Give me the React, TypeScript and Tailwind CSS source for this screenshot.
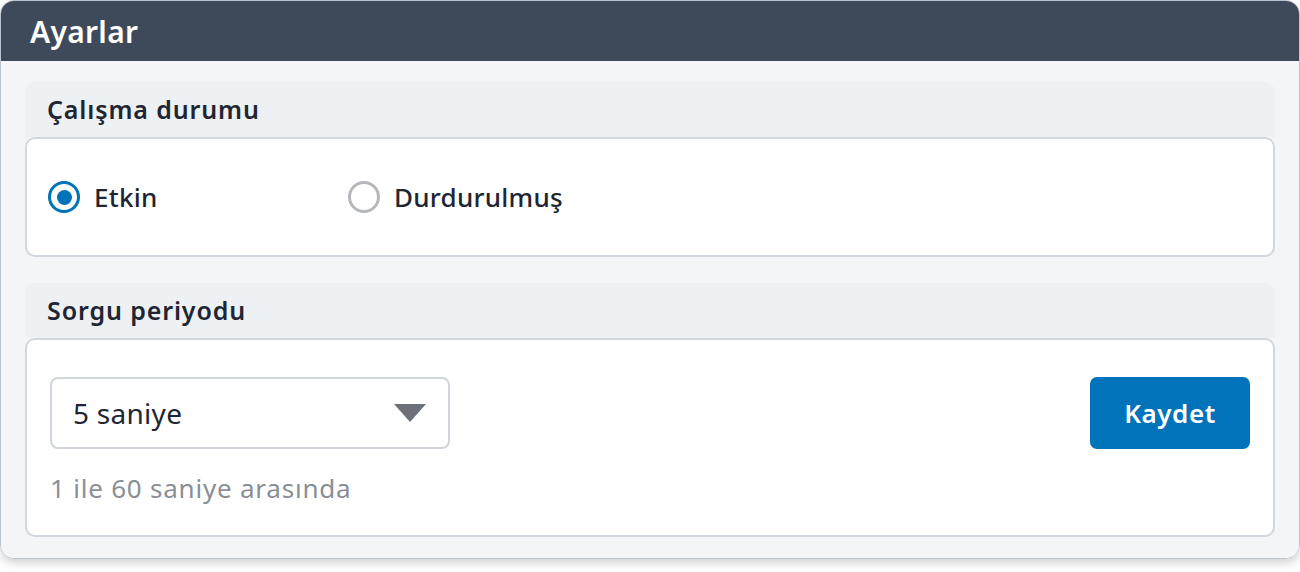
import { useState } from "react";

const FONT = { fontFamily: '"Noto Sans", "Open Sans", sans-serif' };

function SectionTitle({ children }: { children: React.ReactNode }) {
  return (
    <div className="h-[55px] rounded-t-[10px] bg-[#edf1f4] px-[22px] flex items-center text-[25px] tracking-[0.035em] font-semibold text-[#1f2633]">
      {children}
    </div>
  );
}

function Radio({
  checked,
  label,
  onSelect
}: {
  checked: boolean;
  label: string;
  onSelect: () => void;
}) {
  return (
    <button onClick={onSelect} className="flex items-center gap-[14px] cursor-pointer">
      <span
        className={
          checked
            ? "w-[32px] h-[32px] rounded-full border-[3px] border-[#0073bb] flex items-center justify-center"
            : "w-[32px] h-[32px] rounded-full border-[3px] border-[#b4b8bd] flex items-center justify-center"
        }
      >
        {checked && <span className="w-[15px] h-[15px] rounded-full bg-[#0073bb]" />}
      </span>
      <span className="text-[26px] tracking-[0.01em] font-medium text-[#1f2633]">{label}</span>
    </button>
  );
}

export default function App() {
  const [status, setStatus] = useState<"active" | "paused">("active");

  return (
    <div className="w-[1300px] h-[572px] bg-white" style={FONT}>
      <div className="h-[559px] border border-[#b9c3cd] rounded-[14px] overflow-hidden shadow-[0_4px_10px_rgba(0,0,0,0.18)] flex flex-col">
        <div className="h-[60px] shrink-0 bg-[#3e4a59] px-[29px] flex items-center text-[30px] tracking-[0.01em] font-semibold text-white">
          Ayarlar
        </div>

        <div className="flex-1 bg-[#f3f5f7] px-[24px] pt-[21px] flex flex-col gap-[26px]">
          <div>
            <SectionTitle>Çalışma durumu</SectionTitle>
            <div className="h-[120px] bg-white border-2 border-[#d0d7de] rounded-[10px] px-[21px] flex items-center">
              <div className="w-[300px]">
                <Radio
                  checked={status === "active"}
                  label="Etkin"
                  onSelect={() => setStatus("active")}
                />
              </div>
              <Radio
                checked={status === "paused"}
                label="Durdurulmuş"
                onSelect={() => setStatus("paused")}
              />
            </div>
          </div>

          <div>
            <SectionTitle>Sorgu periyodu</SectionTitle>
            <div className="h-[199px] bg-white border-2 border-[#d0d7de] rounded-[10px] pl-[23px] pr-[23px] pt-[37px]">
              <div className="flex items-start justify-between">
                <div className="w-[400px] h-[72px] border-2 border-[#d0d6dc] rounded-[8px] pl-[21px] pr-[22px] flex items-center justify-between">
                  <span className="text-[28px] tracking-[0.01em] text-[#1f2633]">5 saniye</span>
                  <svg width="32" height="18" viewBox="0 0 32 18">
                    <path d="M0 0 H32 L16 18 Z" fill="#6c7079" />
                  </svg>
                </div>
                <button className="w-[160px] h-[72px] rounded-[7px] bg-[#0073bb] text-white text-[26px] tracking-[0.02em] font-semibold cursor-pointer">
                  Kaydet
                </button>
              </div>
              <div className="mt-[21px] leading-[36px] text-[26px] tracking-[0.03em] text-[#8a8f96]">
                1 ile 60 saniye arasında
              </div>
            </div>
          </div>
        </div>
      </div>
    </div>
  );
}
